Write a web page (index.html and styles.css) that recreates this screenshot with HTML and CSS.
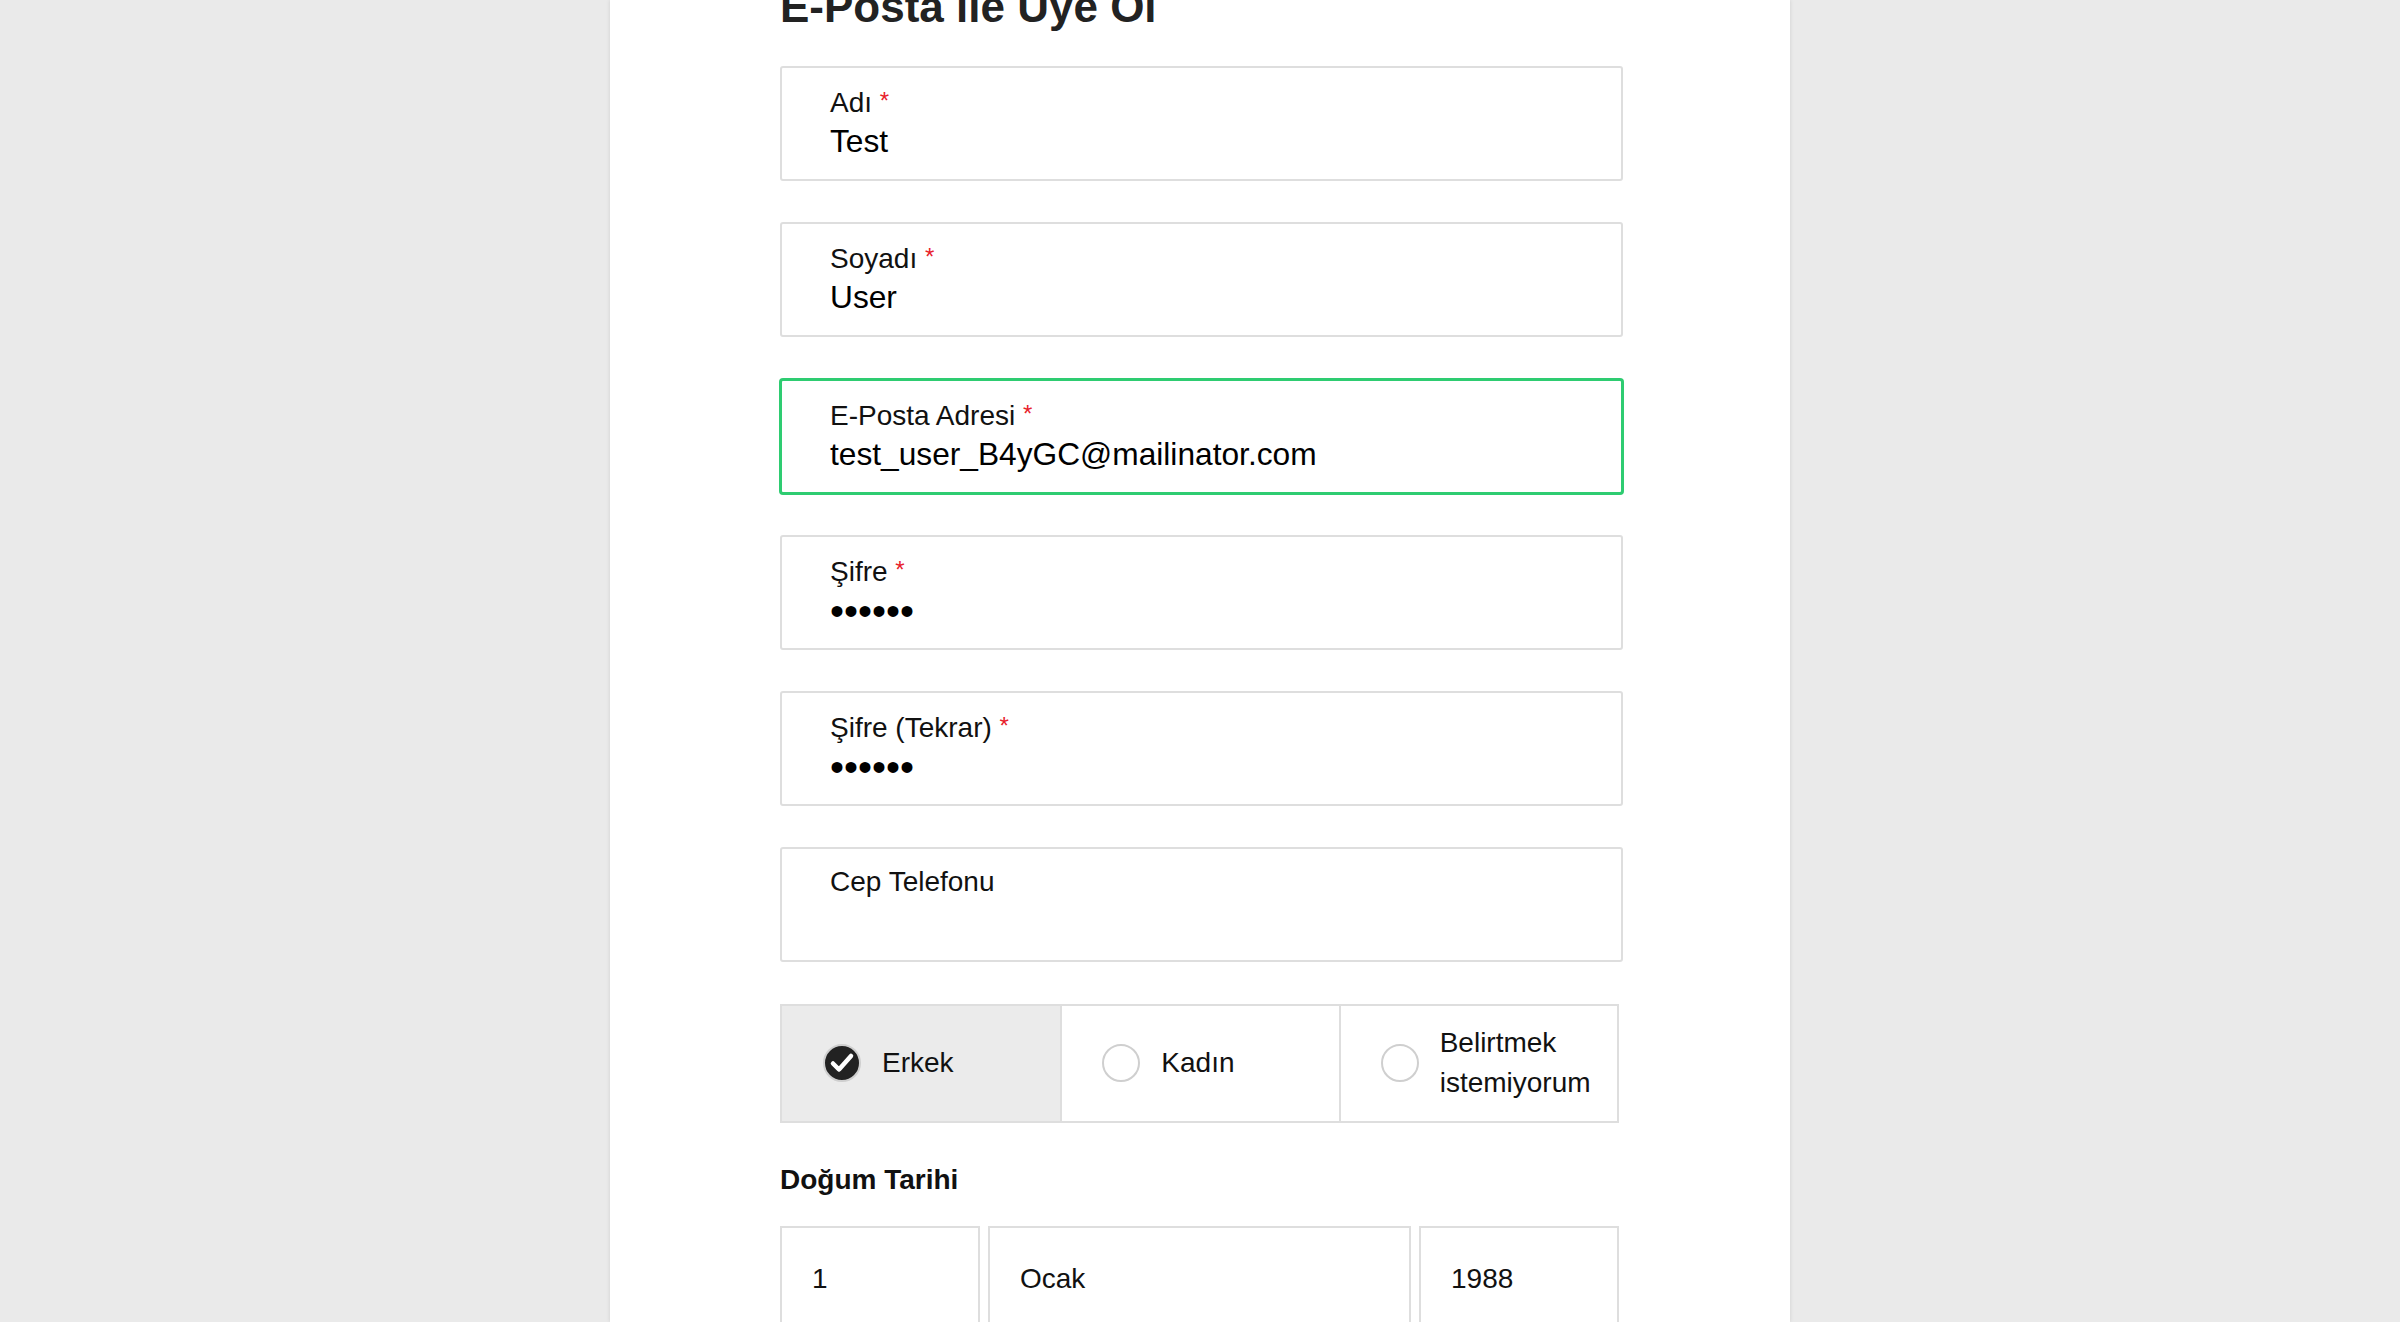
FILE: index.html
```html
<!DOCTYPE html>
<html lang="tr">
<head>
<meta charset="utf-8">
<title>E-Posta ile Üye Ol</title>
<link rel="stylesheet" href="styles.css">
</head>
<body>
<div class="page">
  <div class="form">
    <h1 class="title">E-Posta ile Üye Ol</h1>

    <div class="field">
      <div class="label">Adı <span class="req">*</span></div>
      <div class="value">Test</div>
    </div>

    <div class="field">
      <div class="label">Soyadı <span class="req">*</span></div>
      <div class="value">User</div>
    </div>

    <div class="field focus">
      <div class="label">E-Posta Adresi <span class="req">*</span></div>
      <div class="value">test_user_B4yGC@mailinator.com</div>
    </div>

    <div class="field">
      <div class="label">Şifre <span class="req">*</span></div>
      <div class="value"><span class="dots">••••••</span></div>
    </div>

    <div class="field">
      <div class="label">Şifre (Tekrar) <span class="req">*</span></div>
      <div class="value"><span class="dots">••••••</span></div>
    </div>

    <div class="field">
      <div class="label">Cep Telefonu</div>
      <div class="value"></div>
    </div>

    <div class="gender">
      <div class="seg selected">
        <svg class="radio" width="38" height="38" viewBox="0 0 38 38">
          <circle cx="19" cy="19" r="18" fill="#222" stroke="#cfcfcf" stroke-width="2"/>
          <path d="M10 19.5 L16 25.5 L28 12" fill="none" stroke="#fff" stroke-width="4.5" stroke-linecap="round" stroke-linejoin="round"/>
        </svg>
        <span class="seg-text">Erkek</span>
      </div>
      <div class="seg">
        <svg class="radio" width="38" height="38" viewBox="0 0 38 38">
          <circle cx="19" cy="19" r="18" fill="#fff" stroke="#cfcfcf" stroke-width="2"/>
        </svg>
        <span class="seg-text">Kadın</span>
      </div>
      <div class="seg">
        <svg class="radio" width="38" height="38" viewBox="0 0 38 38">
          <circle cx="19" cy="19" r="18" fill="#fff" stroke="#cfcfcf" stroke-width="2"/>
        </svg>
        <span class="seg-text">Belirtmek<br>istemiyorum</span>
      </div>
    </div>

    <div class="section-title">Doğum Tarihi</div>

    <div class="dates">
      <div class="date day">1</div>
      <div class="date month">Ocak</div>
      <div class="date year">1988</div>
    </div>
  </div>
</div>
</body>
</html>
```

FILE: styles.css
```css
html, body {
  margin: 0;
  padding: 0;
  overflow: hidden;
}

body {
  background: #eaeaea;
  font-family: "Liberation Sans", Arial, sans-serif;
  color: #111;
}

.page {
  width: 1180px;
  height: 1322px;
  margin: 0 auto;
  background: #fff;
  box-shadow: 0 0 4px rgba(0, 0, 0, 0.12);
  overflow: hidden;
}

.form {
  width: 843px;
  margin-left: 170px;
}

.title {
  margin: -15px 0 37px 0;
  font-size: 44px;
  line-height: 44px;
  font-weight: bold;
  color: #222;
}

.field {
  box-sizing: border-box;
  height: 115px;
  margin-bottom: 41.3px;
  padding: 16px 46px 0 48px;
  border: 2px solid #dedede;
  border-radius: 3px;
  background: #fff;
}

.field.focus {
  border-color: #2ecc71;
  box-shadow: 0 0 0 1px #2ecc71;
}

.label {
  font-size: 28px;
  line-height: 34px;
  color: #111;
}

.req {
  color: #e8212b;
  font-size: 24px;
  vertical-align: 3px;
}

.value {
  margin-top: 1px;
  font-size: 31.7px;
  line-height: 40px;
  height: 40px;
  color: #000;
}

.dots {
  font-size: 40px;
  letter-spacing: 0;
  position: relative;
  top: 1px;
}

.gender {
  box-sizing: border-box;
  width: 839px;
  height: 119px;
  margin-top: 1px;
  display: grid;
  grid-template-columns: 1fr 1fr 1fr;
  border: 2px solid #dedede;
}

.seg {
  display: flex;
  align-items: center;
  gap: 21px;
  padding-left: 41px;
  background: #fff;
}

.seg + .seg {
  border-left: 2px solid #dedede;
  padding-left: 40px;
}

.seg.selected {
  background: #ebebeb;
}

.radio {
  flex: none;
  display: block;
}

.seg-text {
  font-size: 28px;
  line-height: 40px;
  color: #111;
}

.section-title {
  margin-top: 40px;
  font-size: 28px;
  line-height: 34px;
  font-weight: bold;
  color: #111;
}

.dates {
  margin-top: 29px;
  display: flex;
  gap: 8px;
  width: 839px;
}

.date {
  box-sizing: border-box;
  height: 115px;
  padding: 31px 0 0 30px;
  border: 2px solid #dedede;
  font-size: 28px;
  line-height: 40px;
  color: #111;
}

.day {
  width: 200px;
}

.month {
  width: 423px;
}

.year {
  width: 200px;
}
```
